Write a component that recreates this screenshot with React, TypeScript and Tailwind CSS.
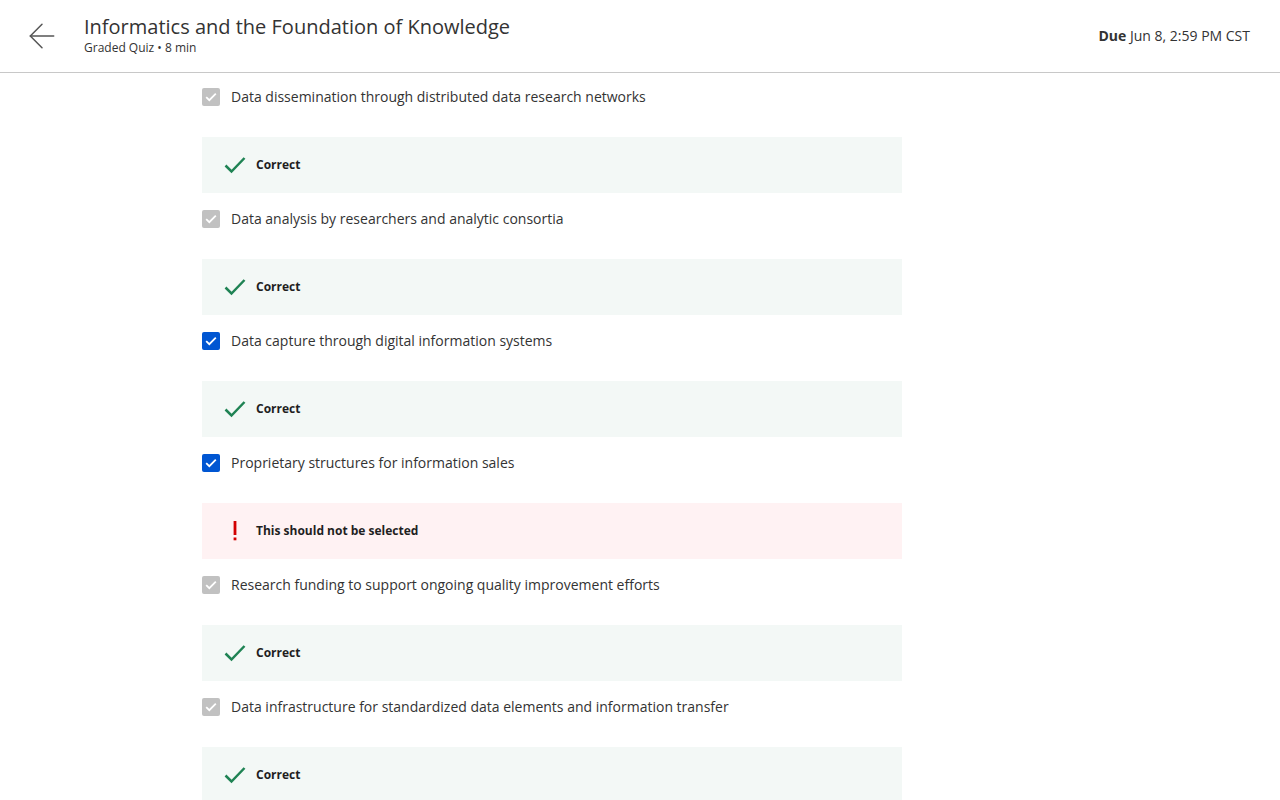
import { ArrowLeft } from 'lucide-react';

interface Option {
  text: string;
  selected: boolean;
  correct: boolean;
}

const options: Option[] = [
  { text: 'Data dissemination through distributed data research networks', selected: false, correct: true },
  { text: 'Data analysis by researchers and analytic consortia', selected: false, correct: true },
  { text: 'Data capture through digital information systems', selected: true, correct: true },
  { text: 'Proprietary structures for information sales', selected: true, correct: false },
  { text: 'Research funding to support ongoing quality improvement efforts', selected: false, correct: true },
  { text: 'Data infrastructure for standardized data elements and information transfer', selected: false, correct: true },
];

function CheckBox({ active }: { active: boolean }) {
  return (
    <span
      className={`w-[18px] h-[18px] rounded-[2px] flex items-center justify-center shrink-0 ${
        active ? 'bg-[#0056d2]' : 'bg-[#c1c1c1]'
      }`}
    >
      <svg width="12" height="10" viewBox="0 0 12 10" fill="none">
        <path d="M1.2 5.2 L4.3 8.2 L10.8 1.6" stroke="white" strokeWidth="1.8" />
      </svg>
    </span>
  );
}

function Feedback({ correct }: { correct: boolean }) {
  return (
    <div
      className={`h-14 flex items-center pl-5 ${correct ? 'bg-[#f3f8f6]' : 'bg-[#fff2f3]'}`}
    >
      <span className="w-[26px] flex justify-center mr-[8px]">
        {correct ? (
          <svg width="24" height="20" viewBox="0 0 24 20" fill="none">
            <path d="M2.5 10.5 L8.5 16.5 L21.5 3" stroke="#1f8354" strokeWidth="2.5" />
          </svg>
        ) : (
          <svg width="6" height="20" viewBox="0 0 6 20" fill="none">
            <rect x="1.6" y="0" width="2.8" height="14" fill="#d30001" />
            <rect x="1.6" y="16.5" width="2.8" height="2.8" fill="#d30001" />
          </svg>
        )}
      </span>
      <span className="text-[12px] font-bold text-[#1f1f1f]">
        {correct ? 'Correct' : 'This should not be selected'}
      </span>
    </div>
  );
}

export default function App() {
  return (
    <div className="bg-white text-[#1f1f1f] font-['Open_Sans',sans-serif] overflow-hidden h-[800px]">
      {/* HEADER */}
      <div className="h-[73px] border-b border-[#c8c8c8] flex items-center pl-[22px] pr-[28px]">
        <ArrowLeft size={40} strokeWidth={0.9} className="text-[#555] mr-[22px] -mt-[1px]" />
        <div className="flex-1 -mt-[2px]">
          <h1 className="text-[20px] leading-[26px] text-[#333]">
            Informatics and the Foundation of Knowledge
          </h1>
          <p className="text-[12px] leading-[16px] text-[#333]">Graded Quiz • 8 min</p>
        </div>
        <div className="text-[14px] text-[#333] mr-[2px] -mt-[1px]">
          <span className="font-bold">Due</span> Jun 8, 2:59 PM CST
        </div>
      </div>

      {/* OPTIONS */}
      <div className="w-[700px] ml-[202px] pt-[15px]">
        {options.map((o, i) => (
          <div key={i}>
            <div className={`flex items-center h-[18px] mb-[31px] ${i === 0 ? '' : 'mt-[17px]'}`}>
              <CheckBox active={o.selected} />
              <span className="ml-[11px] text-[14px] leading-[18px] -mt-[1px] text-[#333] whitespace-nowrap">
                {o.text}
              </span>
            </div>
            <Feedback correct={o.correct} />
          </div>
        ))}
      </div>
    </div>
  );
}
